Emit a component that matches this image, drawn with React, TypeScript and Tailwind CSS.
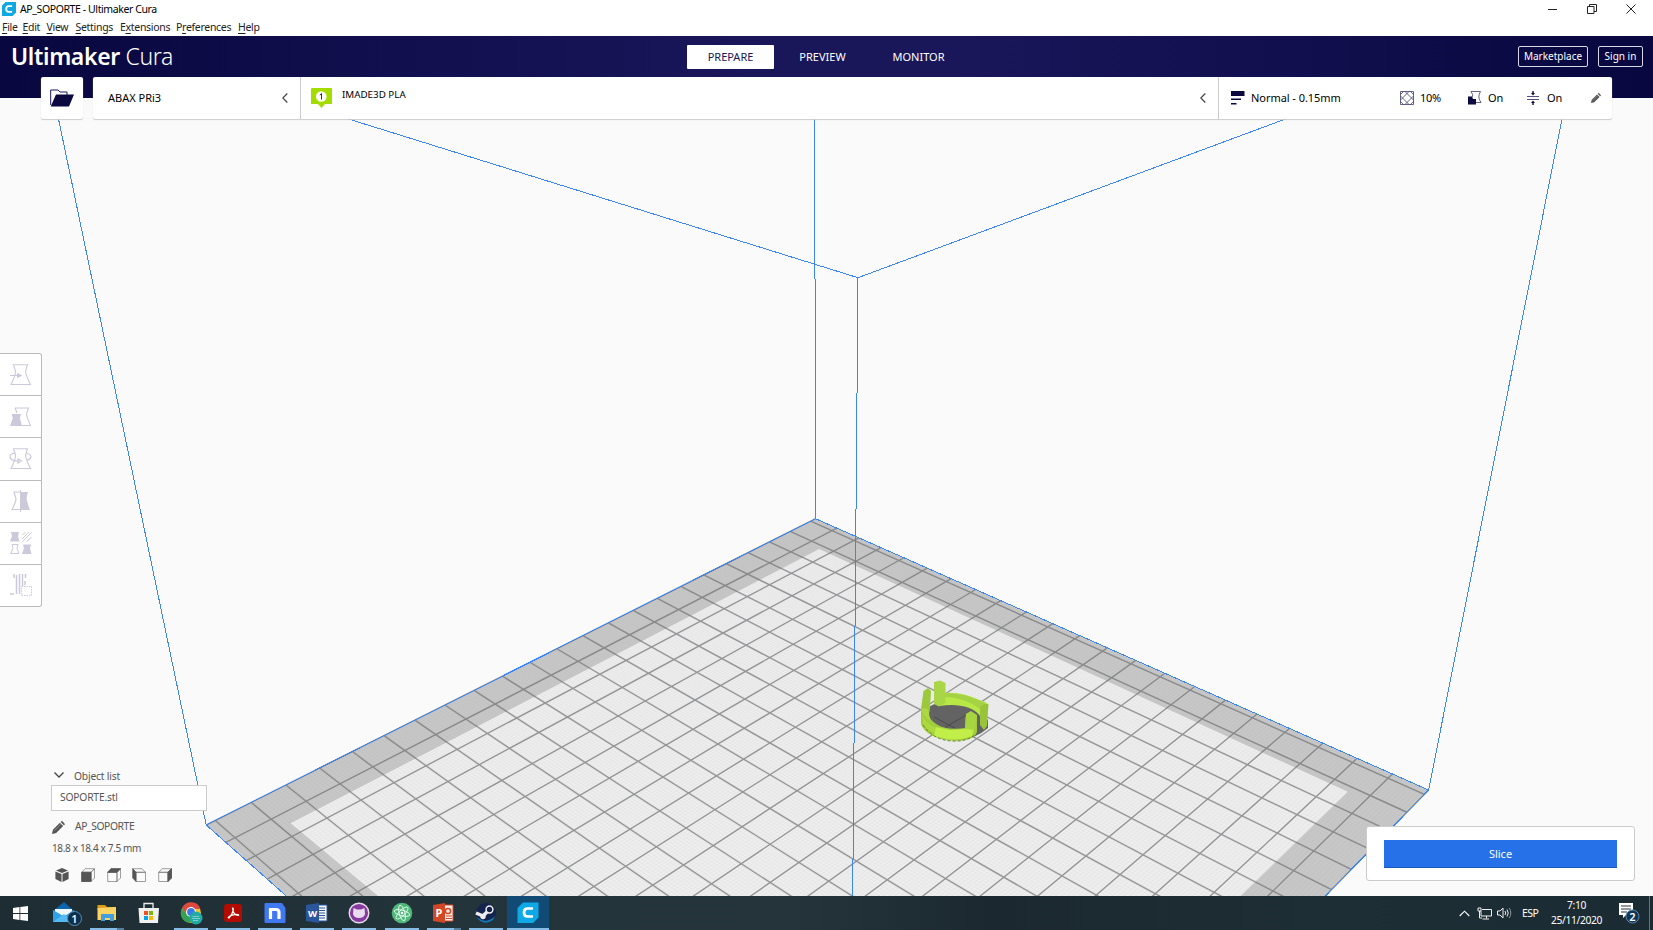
import React from "react";

type Pt = [number, number];

/* Build plate corners on screen, and its size in centimetres. */
const BACK: Pt = [815.6, 518.7];
const RIGHT: Pt = [1428.6, 790];
const FRONT: Pt = [844, 1390.5];
const LEFT: Pt = [206.2, 825];
const DEPTH = 22;
const WIDTH = 22.5;

function makeProjection() {
  const [x0, y0] = BACK;
  const [x1, y1] = RIGHT;
  const [x2, y2] = FRONT;
  const [x3, y3] = LEFT;
  const dx1 = x1 - x2, dx2 = x3 - x2, sx = x0 - x1 + x2 - x3;
  const dy1 = y1 - y2, dy2 = y3 - y2, sy = y0 - y1 + y2 - y3;
  const den = dx1 * dy2 - dx2 * dy1;
  const g = (sx * dy2 - dx2 * sy) / den;
  const h = (dx1 * sy - sx * dy1) / den;
  const a = x1 - x0 + g * x1, b = x3 - x0 + h * x3;
  const d = y1 - y0 + g * y1, e = y3 - y0 + h * y3;
  return (u: number, v: number): string => {
    const s = u / DEPTH, t = v / WIDTH, w = g * s + h * t + 1;
    return `${((a * s + b * t + x0) / w).toFixed(2)} ${((d * s + e * t + y0) / w).toFixed(2)}`;
  };
}

const project = makeProjection();
const range = (n: number) => Array.from({ length: n }, (_, i) => i);
const major =
  range(23).map((u) => `M${project(u, 0)}L${project(u, WIDTH)}`).join("") +
  range(23).map((v) => `M${project(0, v + 0.25)}L${project(DEPTH, v + 0.25)}`).join("");
const minor =
  range(220).map((u) => `M${project(u / 10, 0)}L${project(u / 10, WIDTH)}`).join("") +
  range(225).map((v) => `M${project(0, v / 10)}L${project(DEPTH, v / 10)}`).join("");

function Viewport() {
  return (
    <svg className="absolute inset-0 h-full w-full" viewBox="0 98 1653 798" preserveAspectRatio="none">
      <polygon points={[BACK, RIGHT, FRONT, LEFT].map((p) => p.join(",")).join(" ")} fill="#c8c8c8" />
      <polygon points="819.2,549 1347.8,791.7 1240.6,896 838,1288 378,896 290.6,823.3" fill="#eeeeee" />
      <path d={minor} stroke="#777" strokeOpacity="0.06" strokeWidth="0.8" fill="none" />
      <path d={major} stroke="#6c6d70" strokeOpacity="0.68" strokeWidth="1.4" fill="none" />
      {/* model */}
      <path d="M925 715Q925 704 945 702Q975 704 988 720L988 728Q975 740 955 740Q925 737 925 715Z" fill="#636363" />
      <path d="M941 731L949 725L968 714M934 717L949 725L955 728" stroke="#4b4b4b" fill="none" />
      <path d="M921 709L921 724C925 736 945 742 962 740.5C972 739.500 977 735 977 731L977 716L971 712L966 714L965 728C945 731 931 725 928 713L928 709Z" fill="#a0cd3a" />
      <path d="M922 711C922 723 936 729 947 730C960 731 967 729 967 726L975 726L974 733C967 741 935 741 923 724Z" fill="#abd93f" />
      <path d="M936 727L950 730L966 729L973 730L972 736Q962 740 949 739.500L934 736Z" fill="#c1ee48" />
      <path d="M923.500 691L928 688L931 691L930 709L929 714Q921 717 921 709Z" fill="#9bc93b" />
      <path d="M921 709Q923 716 930 721L929 713L928 709L924 708Z" fill="#add841" />
      <path d="M941 702L943 693C963 691 977 699 985 702L988 704L987 711L983 709L980 716C974 706 955 703 940 706Z" fill="#b8e846" />
      <path d="M945 693.500C963 692 977 700 986 703L980 709C970 701 955 697 945 697Z" fill="#a5d345" />
      <path d="M980 707L984 704L988.500 704L987 726L984 730L980 725Z" fill="#97c438" />
      <path d="M934 682L940 680.500L945.500 683L945.500 703L939 706.500L934 704Z" fill="#a8d647" />
      <path d="M966 714L971 711L977 715L975 729L965 728Z" fill="#a7d441" />
      <path d="M923 725Q933 740 952 741Q968 742 977 733" fill="none" stroke="#65832b" strokeDasharray="3 2" />
      {/* build volume */}
      <g stroke="#3b86f3" strokeWidth="1" fill="none" shapeRendering="crispEdges">
        <path d="M58.500 119L206.200 825L815.600 518.700L1428.600 790L1562 119" />
        <path d="M206.200 825L844 1390.500L1428.600 790" />
        <path d="M814.600 119L815.600 518.700" />
        <path d="M348.500 119L858 277.700L1285.500 119" />
        <path d="M858 277.700L852.700 896" />
      </g>
    </svg>
  );
}

function CuraLogo({ className }: { className: string }) {
  return (
    <svg className={className} viewBox="0 0 20 20">
      <path d="M5 0H20V15L15 20H0V5Z" fill="#0ea8e2" />
      <path d="M14.500 6H9.500Q6 6 6 10T9.500 14H14.500" fill="none" stroke="#fff" strokeWidth="2.600" />
    </svg>
  );
}

const menus: [string, string, string, string][] = [
  ["", "F", "ile", "w-[20.500px]"],
  ["", "E", "dit", "w-6"],
  ["", "V", "iew", "w-[29px]"],
  ["", "S", "ettings", "w-[44.500px]"],
  ["E", "x", "tensions", "w-[56px]"],
  ["P", "r", "eferences", "w-[62px]"],
  ["", "H", "elp", "w-8"],
];

function TitleBar() {
  return (
    <div className="flex h-9 shrink-0 flex-col bg-white text-black">
      <div className="flex h-[19px] items-center">
        <CuraLogo className="ml-[2px] h-[14px] w-[14px]" />
        <span className="ml-1 whitespace-nowrap text-[10.500px] leading-none tracking-[-0.4px]">AP_SOPORTE - Ultimaker Cura</span>
        <div className="ml-auto mr-[17px] flex items-center gap-[29px]">
          <svg className="h-[10px] w-[10px]" viewBox="0 0 10 10"><path d="M0 5.500H9" stroke="#222" /></svg>
          <svg className="h-[10px] w-[10px]" viewBox="0 0 10 10" fill="none" stroke="#222"><path d="M.5 2.500H7V9.500H.5ZM2.500 2.500V.5H9.500V7.500H7" /></svg>
          <svg className="h-[10px] w-[10px]" viewBox="0 0 10 10"><path d="M.5.5L9.500 9.500M9.500.5L.5 9.500" stroke="#222" /></svg>
        </div>
      </div>
      <div className="flex h-[18px] items-center pl-[2px] text-[10.500px] leading-none tracking-[-0.3px] text-[#222]">
        {menus.map(([a, key, b, w]) => (
          <span key={a + key + b} className={`${w} shrink-0 whitespace-nowrap`}>{a}<u className="underline-offset-2">{key}</u>{b}</span>
        ))}
      </div>
    </div>
  );
}

function Header() {
  return (
    <header className="grid h-[62px] shrink-0 grid-cols-[687px_1fr_auto] items-start bg-[linear-gradient(90deg,#08073f_0%,#19165a_45%,#19165a_58%,#08073f_100%)] text-white">
      <div className="pl-[11px] pt-[5px] text-[23px] leading-[30px] tracking-[-0.35px]"><b className="font-semibold">Ultimaker</b> <span className="font-light">Cura</span></div>
      <nav className="flex pt-[9px] text-[11px] leading-6">
        <span className="w-[87px] rounded-[1px] bg-white text-center text-[#19165a]">PREPARE</span>
        <span className="ml-[5px] w-[87px] text-center">PREVIEW</span>
        <span className="ml-2 w-[89px] text-center">MONITOR</span>
      </nav>
      <div className="flex gap-[10px] pr-[10px] pt-[10px] text-[10px] leading-[19px]">
        <span className="w-[70px] rounded-[2px] border border-[#d8d8e4] text-center">Marketplace</span>
        <span className="w-[45px] rounded-[2px] border border-[#d8d8e4] text-center">Sign in</span>
      </div>
    </header>
  );
}

function Left() {
  return <svg className="h-[10px] w-[6px] shrink-0" viewBox="0 0 6 10"><path d="M5.300.5L.8 5L5.300 9.500" fill="none" stroke="#444" strokeWidth="1.200" /></svg>;
}

function Pencil({ className }: { className: string }) {
  return (
    <svg className={className} viewBox="0 0 14 14" fill="#555">
      <path d="M0 14L1 9.500L8.500 2L12 5.500L4.500 13ZM9.300 1.200L10.500 0Q11 0 12.500 1.500T14 3.500L12.800 4.700Z" />
      <path d="M2.500 10.500L9.500 3.500" stroke="#aaa" strokeWidth=".7" />
    </svg>
  );
}

function Toolbar() {
  return (
    <div className="relative -mt-[21px] ml-[41px] flex h-[42px] w-[1571px] shrink-0 text-[11px] text-black">
      <div className="flex w-[42px] items-center justify-center rounded-[2px] bg-white shadow-[0_1px_1px_#ccc]">
        <svg className="h-[18px] w-6" viewBox="0 0 24 18"><path d="M.7 16V1H8L10 3H17V6" fill="none" stroke="#19175b" strokeWidth="1" /><path d="M.7 17.500L6 5.500H24L19 17.500Z" fill="#0b093f" /></svg>
      </div>
      <div className="ml-[10px] flex flex-1 rounded-[2px] bg-white shadow-[0_1px_1px_#ccc]">
        <div className="flex w-[208px] items-center justify-between border-r border-[#ccc] pl-[15px] pr-[12px]"><span>ABAX PRi3</span><Left /></div>
        <div className="flex w-[918px] items-center border-r border-[#ccc] pl-[10px] pr-[12px]">
          <svg className="h-5 w-[21px]" viewBox="0 0 21 20"><path d="M1 0H20Q21 0 21 1V16H14L10.500 20L7 16H0V1Q0 0 1 0Z" fill="#a4dc00" /><circle cx="10.300" cy="8.500" r="5.300" fill="#fff" /><path d="M8.800 7L10.500 5.700V11.500" fill="none" stroke="#333" strokeWidth="1" /></svg>
          <span className="mb-[6px] ml-[10px] text-[9.800px]">IMADE3D PLA</span>
          <span className="ml-auto flex"><Left /></span>
        </div>
        <div className="flex flex-1 items-center pl-3 pr-[11px]">
          <svg className="h-[14px] w-[14px]" viewBox="0 0 14 14" fill="#0b093f"><path d="M0 0H13.500V5H0ZM0 7.500H10V9H0ZM0 12H5.500V13.500H0Z" /></svg>
          <span className="ml-[6px] w-[149px] tracking-[-0.05px]">Normal - 0.15mm</span>
          <svg className="h-[14px] w-[14px]" viewBox="0 0 14 14" fill="none" stroke="#3f3d70" strokeWidth=".8"><path d="M.5.5H13.500V13.500H.5ZM.5 3.500L3.500.5M.5 9L9 .5M5 .5L13.500 9M10.500.5L13.500 3.500M13.500 5L5 13.500M.5 5L9 13.500M13.500 10.500L10.500 13.500M.5 10.500L3.500 13.500" /></svg>
          <span className="ml-[6px] w-12 tracking-[-0.3px]">10%</span>
          <svg className="h-[14px] w-[14px]" viewBox="0 0 14 14"><path d="M3 .5H12.500Q9 6 13 11.500H8" fill="none" stroke="#55527c" strokeWidth=".9" /><path d="M3 .5Q6 4 4 6.500" fill="none" stroke="#55527c" strokeWidth=".9" /><path d="M0 5.500H4L5 8H8V13.500H0Z" fill="#0b093f" /></svg>
          <span className="ml-[6px] w-[39px]">On</span>
          <svg className="h-[14px] w-[12px]" viewBox="0 0 12 14"><path d="M0 5.500H12M0 8.500H12" stroke="#3f3d70" strokeWidth=".9" /><path d="M5.300 0H6.700V2H8L6 4.500L4 2H5.300ZM5.300 14H6.700V12H8L6 9.500L4 12H5.300Z" fill="#0b093f" /></svg>
          <span className="ml-[8px]">On</span>
          <Pencil className="ml-auto h-[10px] w-[10px]" />
        </div>
      </div>
    </div>
  );
}

const HOURGLASS = "M3.500.7H17.500L15.500 7Q16 12 20.500 20.500H1Q5.500 12 5.500 7Z";
const toolIcons: React.ReactNode[] = [
  <><path d={HOURGLASS} fill="none" stroke="#cbc9da" strokeWidth="1.100" /><path d="M0 11.500H8M7.500 9.500V13.500L11.500 11.500Z" fill="#cbc9da" stroke="#cbc9da" /></>,
  <><path d="M5 2H18.500L16.500 8Q17 12 20.500 19.500H12M5 2L7 7" fill="none" stroke="#cbc9da" strokeWidth="1.100" /><path d="M1.500 8H11L9.800 12L12 20H0L2.800 12Z" fill="#cbc9da" /></>,
  <><path d={HOURGLASS} fill="none" stroke="#cbc9da" strokeWidth="1.100" /><path d="M5.500 5Q0 5.500 0 9Q1 13 7 13H9M16 5Q21 6 21 9Q20 12 16.500 12M8 11V15L11.500 13Z" fill="none" stroke="#cbc9da" strokeWidth="1.200" /></>,
  <><path d="M10 2H4L6 9Q6 12 2 19.500H10" fill="none" stroke="#cbc9da" strokeWidth="1.200" /><path d="M11 2H18L16.500 8Q17 12 20 20H11Z" fill="#cbc9da" /><path d="M10.500 0V22" stroke="#cbc9da" /></>,
  <><path d="M1 0H9L8 4L9.500 9.500H0L2 4ZM13 12.500H21L20 16.500L21.500 22H12L14 16.500Z" fill="#cbc9da" /><path d="M2 12.500H8L7 16.500L9 21.500H.7L3 16.500ZM12.500 3L15.500 0M12 7L19 0M12.500 9.500L21.500 .5M17 9.500L21.500 5" fill="none" stroke="#cbc9da" /></>,
  <><path d="M4 0V4M6.500 1V20M9.500 0V20M12.500 0V13M15.500 0V4M15 7V11M0 20H4" stroke="#cbc9da" strokeWidth="1.500" /><path d="M11.500 12.500H21.500V21.500H11.500Z" fill="#fff" stroke="#cbc9da" strokeDasharray="1.500 1" /></>,
];

function Tools() {
  return (
    <div className="relative mt-[234px] flex h-[254px] w-[42px] shrink-0 flex-col divide-y divide-[#bbb] rounded-r-[3px] border border-l-0 border-[#bbb] bg-white">
      {toolIcons.map((icon, i) => (
        <div key={i} className="flex flex-1 items-center justify-center">
          <svg className="h-[22px] w-[22px] overflow-visible" viewBox="0 0 22 22">{icon}</svg>
        </div>
      ))}
    </div>
  );
}

const TOP = "M4 .7H13.500L10 4.300H.7Z";
const FACE = "M.7 4.300H10V13.500H.7Z";
const SIDE = "M10 4.300L13.500.7V10L10 13.500Z";

function Cube() {
  return <path d={TOP + FACE + SIDE} />;
}

/* Outline drawn with its open side towards the left. */
function LeftCube() {
  return <path d="M.7.7H10L13.500 4.300H4ZM4 4.300H13.500V13.500H4Z" />;
}

function CubeIcon({ solid, left }: { solid: string; left?: boolean }) {
  return (
    <svg className="h-[14px] w-[14px]" viewBox="0 0 14 14" fill="none" stroke="#777" strokeWidth=".7">
      {left ? <LeftCube /> : <Cube />}
      <path d={solid} fill="#555" stroke="#555" />
    </svg>
  );
}

function ObjectList() {
  return (
    <div className="ml-[51px] w-[156px] text-[10.300px] text-[#555]">
      <div className="flex h-4 items-center pl-[3px]">
        <svg className="mb-1 h-[6px] w-[10px]" viewBox="0 0 10 6"><path d="M.5.5L5 5L9.500.5" fill="none" stroke="#444" strokeWidth="1.300" /></svg>
        <span className="ml-[10px] tracking-[-0.2px]">Object list</span>
      </div>
      <div className="flex h-[26px] items-center border border-[#ccc] bg-white pl-2 tracking-[-0.2px]">SOPORTE.stl</div>
      <div className="mt-[8px] flex h-4 items-center">
        <Pencil className="ml-px h-[13px] w-[13px]" />
        <span className="ml-[10px] tracking-[-0.4px]">AP_SOPORTE</span>
      </div>
      <div className="mt-[5px] flex h-4 items-center whitespace-nowrap pl-px text-[10px] tracking-[-0.35px]">18.8 x 18.4 x 7.5 mm</div>
      <div className="mb-[14px] mt-[12px] flex gap-[11.800px] pl-[4px]">
        <svg className="h-[14px] w-[14px]" viewBox="0 0 14 14" fill="#555"><path d="M7 0L13 2.500L7 5L1 2.500ZM.4 3.400L6.500 6V14L.4 11ZM13.600 3.400L7.500 6V14L13.600 11Z" /></svg>
        <CubeIcon solid={FACE} />
        <CubeIcon solid={TOP} />
        <CubeIcon left solid="M.7.7L4 4.300V13.500L.7 10Z" />
        <CubeIcon solid={SIDE} />
      </div>
    </div>
  );
}

function WindowsIcon() {
  return <svg className="h-[15px] w-[15px]" viewBox="0 0 15 15" fill="#fff"><path d="M0 2L6.500 1V7H0ZM7.300.9L15 0V7H7.300ZM0 8H6.500V14L0 13ZM7.300 8H15V15L7.300 14Z" /></svg>;
}

const apps: { name: string; line: string; active?: boolean; icon: React.ReactNode }[] = [
  { name: "mail", line: "none", icon: <><path d="M0 9L11 0L21 9V20H0Z" fill="#0a65ae" /><path d="M2 7H19V16H2Z" fill="#eef6fc" /><path d="M0 8L11 14.500L21 8V20H0Z" fill="#2da2e8" /><path d="M0 20L11 12L21 20Z" fill="#55b9f2" /><circle cx="21.500" cy="16.500" r="7" fill="#0c2f50" stroke="#5a8cab" /><text x="21.500" y="20.500" fontSize="11" fontWeight="600" textAnchor="middle" fill="#fff">1</text></> },
  { name: "files", line: "split", icon: <><path d="M1.500 3H9L11 5H20V8H1.500Z" fill="#dc9d16" /><path d="M1.500 6L20 5V18H1.500Z" fill="#f9d465" /><path d="M5 18V12H18V19H14V16H9V19H5Z" fill="#3f9fe0" /></> },
  { name: "store", line: "none", icon: <><path d="M6 7V1.500H15V7" fill="none" stroke="#eee" strokeWidth="1.300" /><path d="M.5 6H21L20 21H1.500Z" fill="#f1f1f1" /><path d="M6 9H10V13H6Z" fill="#ee5024" /><path d="M11 9H15V13H11Z" fill="#7eb900" /><path d="M6 14H10V18H6Z" fill="#03a4ee" /><path d="M11 14H15V18H11Z" fill="#ffb800" /></> },
  { name: "chrome", line: "full", icon: <><circle cx="11" cy="11" r="10" fill="#f3c52e" /><path d="M2 6A10 10 0 0 1 20.500 7H11L7 13Z" fill="#dc4a3d" /><path d="M2 6A10 10 0 0 0 10 21L14 14L7 13Z" fill="#36a055" /><circle cx="11" cy="10" r="5" fill="#fff" /><circle cx="11" cy="10" r="3.900" fill="#397be4" /><circle cx="16" cy="16" r="6.500" fill="#24aaa4" /><path d="M12.500 14.500H19M12 16.500H20M13 18.500H18" stroke="#a5dfd9" strokeWidth=".7" /></> },
  { name: "acrobat", line: "full", icon: <><rect x="2" y="2" width="18" height="18" rx="3" fill="#b30b00" /><path d="M10.500 6Q12 6 11 9Q10 13 7 16Q5 16 8 14Q12 12 16 12.500Q18 14 14 13Q11 11 10.500 6Z" fill="none" stroke="#fff" strokeWidth="1.200" /></> },
  { name: "nitro", line: "full", icon: <><path d="M.5 2Q.5 1 1.500 1H18L21.500 6V20Q21.500 21 20.500 21H2Q.5 21 .5 20Z" fill="#4079f2" /><path d="M6.500 17V7.500H12Q15 7.500 15 10.500V17" fill="none" stroke="#fff" strokeWidth="3.200" /></> },
  { name: "word", line: "full", icon: <><path d="M11 3H21V19H11Z" fill="#f5f8fc" stroke="#2b579a" /><path d="M13 6H19M13 8.500H19M13 11H19M13 13.500H19M13 16H19" stroke="#2b579a" /><path d="M0 3L13 1V21L0 19Z" fill="#2b579a" /><text x="6.500" y="14.500" fontSize="9.500" fontWeight="700" textAnchor="middle" fill="#fff">W</text></> },
  { name: "github", line: "full", icon: <><circle cx="11" cy="11" r="9.800" fill="#873b9f" stroke="#e5dce9" strokeWidth="1.400" /><path d="M5.500 6L9 7.500H13L16.500 6L17 12Q16 16 11 16T5 12Z" fill="#eadcf0" /></> },
  { name: "atom", line: "full", icon: <><circle cx="11" cy="11" r="10.300" fill="#4fb779" /><g fill="none" stroke="#e8fff0" strokeWidth=".9"><ellipse cx="11" cy="11" rx="8" ry="2.800" transform="rotate(15 11 11)" /><ellipse cx="11" cy="11" rx="8" ry="2.800" transform="rotate(75 11 11)" /><ellipse cx="11" cy="11" rx="8" ry="2.800" transform="rotate(135 11 11)" /></g><circle cx="11" cy="11" r="1.300" fill="#fff" /></> },
  { name: "powerpoint", line: "split", icon: <><path d="M11 3H20V19H11Z" fill="#f9ebe5" stroke="#d24726" /><circle cx="15" cy="9" r="2.600" fill="none" stroke="#d24726" strokeWidth="1.500" /><path d="M13 14H19M13 16.500H19" stroke="#d24726" /><path d="M0 3L12 1V21L0 19Z" fill="#d24726" /><text x="6" y="15" fontSize="11" fontWeight="700" textAnchor="middle" fill="#fff">P</text></> },
  { name: "steam", line: "full", icon: <><circle cx="11" cy="11" r="10" fill="#14244f" /><path d="M2 15Q11 23 20 14L18 18Q10 24 3 17Z" fill="#1779b3" /><path d="M1 11L8 14L13 9" fill="none" stroke="#eee" strokeWidth="3.500" /><circle cx="14.500" cy="7.500" r="3.400" fill="#14244f" stroke="#eee" strokeWidth="1.500" /><circle cx="8" cy="14.500" r="2.700" fill="#eee" /></> },
  { name: "cura", line: "full", active: true, icon: <><path d="M6 0.500H21.500V15.500L16 21H.5V6Z" fill="#0fa9e5" /><path d="M16 6.500H10.500Q7 6.500 7 10.500T10.500 14.500H16" fill="none" stroke="#fff" strokeWidth="2.700" /></> },
];

function Taskbar() {
  return (
    <footer className="flex h-[34px] shrink-0 bg-[linear-gradient(90deg,#1e2d34_0%,#24343b_30%,#25343b_48%,#1b282f_60%,#1e2e35_80%,#1b2b33_100%)] text-white">
      <div className="flex w-[43.400px] items-center justify-center pr-[2px]"><WindowsIcon /></div>
      {apps.map((app) => (
        <div key={app.name} className={`flex w-[42.150px] flex-col items-center ${app.active ? "bg-[#104a75]" : ""}`}>
          <svg className="mt-[6px] h-[22px] w-[22px] shrink-0 overflow-visible" viewBox="0 0 22 22">{app.icon}</svg>
          {app.line !== "none" && (
            <div className={`mt-auto flex h-[2px] ${app.active ? "w-full" : "w-[34px]"} bg-[#86bbe5]`}>
              {app.line === "split" && <div className="ml-auto w-[7px] bg-[#557f9d]" />}
            </div>
          )}
        </div>
      ))}
      <div className="ml-auto flex items-center text-[10.500px] leading-[15px]">
        <svg className="h-[7px] w-[11px]" viewBox="0 0 11 7"><path d="M.7 6L5.500 1.200L10.300 6" fill="none" stroke="#fff" strokeWidth="1.100" /></svg>
        <svg className="ml-[7px] h-[13px] w-[15px]" viewBox="0 0 15 13" fill="none" stroke="#eee"><path d="M5 2.500H14.500V9H4M4 9V4M9.500 9V11.500M5.500 12H12M1 1H4V4H1ZM2.500 4V11H5" /></svg>
        <svg className="ml-[5px] h-[12px] w-[16px]" viewBox="0 0 16 12" fill="none" stroke="#eee"><path d="M.5 4H3L6 1V11L3 8H.5ZM8 4Q9.500 6 8 8M10 2.500Q12.500 6 10 9.500" /><path d="M12.200 1Q15.500 6 12.200 11" stroke="#87939a" /></svg>
        <span className="ml-[9px] w-[29px] tracking-[-0.5px]">ESP</span>
        <div className="w-[51px] whitespace-nowrap text-center text-[10.300px] tracking-[-0.4px]"><div>7:10</div><div className="-mx-1">25/11/2020</div></div>
        <svg className="ml-[16px] h-[22px] w-[22px]" viewBox="0 0 22 22"><path d="M1 1H15V13H8L5 16V13H1Z" fill="#fff" /><path d="M3 4H13M3 7H13M3 10H9" stroke="#26343a" /><circle cx="14.500" cy="14.500" r="6.500" fill="#0f3559" stroke="#5a87a5" /><text x="14.500" y="18.500" fontSize="11" fontWeight="600" textAnchor="middle" fill="#fff">2</text></svg>
        <div className="ml-[9px] h-[34px] w-[4px] border-l border-[#65747b]" />
      </div>
    </footer>
  );
}

export default function App() {
  return (
    <div className="flex h-[930px] w-[1653px] flex-col overflow-hidden bg-[#fafafa] font-['Noto_Sans','Open_Sans',sans-serif]">
      <TitleBar />
      <Header />
      <main className="relative flex h-[798px] shrink-0 flex-col">
        <Viewport />
        <Toolbar />
        <Tools />
        <div className="relative mt-auto flex items-end justify-between">
          <ObjectList />
          <div className="mb-[15px] mr-[18px] h-[55px] w-[269px] rounded-[3px] border border-[#ccc] bg-white pl-[17px] pr-4 pt-[13px]">
            <button className="block h-[28px] w-[233px] border-b border-[#1d59bd] bg-[#2671e7] text-[11px] leading-[27px] text-white">Slice</button>
          </div>
        </div>
      </main>
      <Taskbar />
    </div>
  );
}
